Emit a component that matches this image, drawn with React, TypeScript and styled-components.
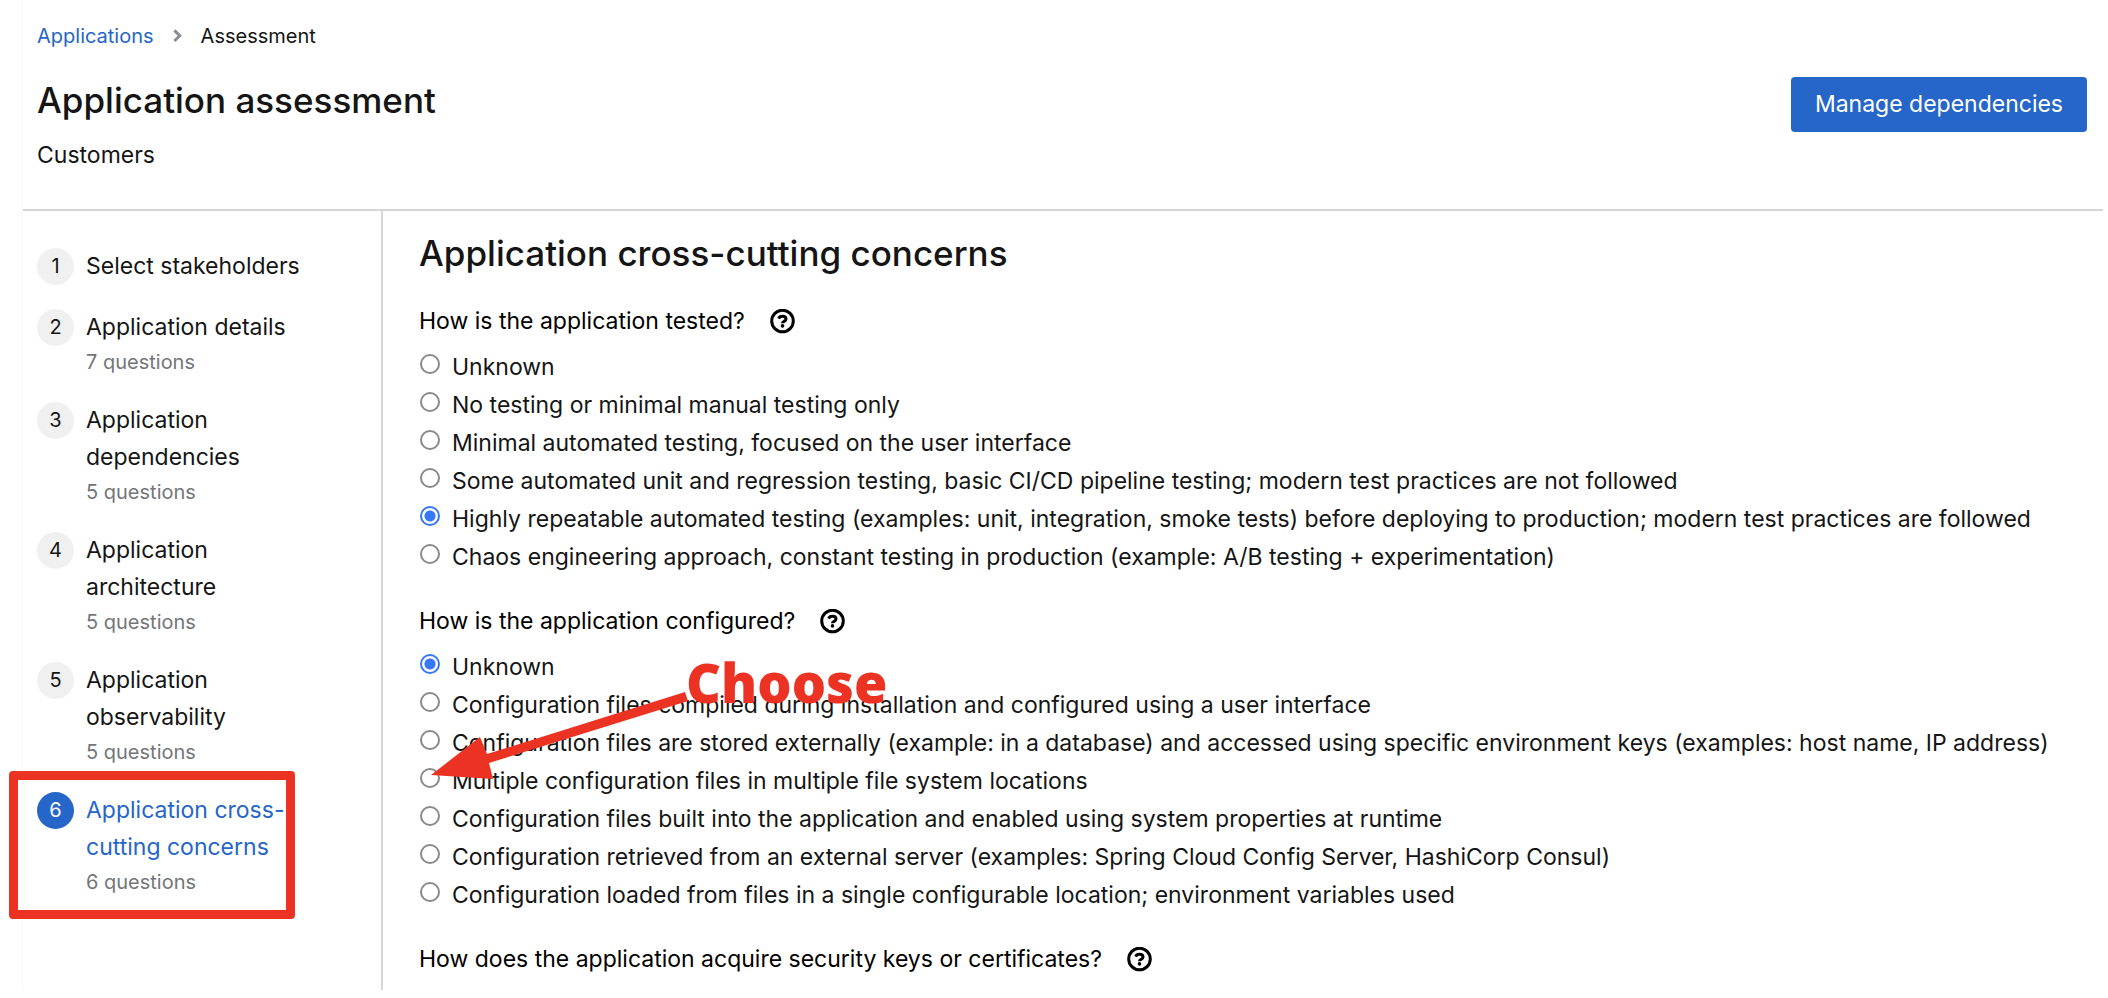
import React from "react";
import styled, { createGlobalStyle } from "styled-components";

const color = {
  text: "#151515",
  muted: "#737679",
  blue: "#2566c8",
  radio: "#3478f6",
  line: "#d6d6d6",
  badge: "#f0f0f0",
  mark: "#ec3323",
};

const GlobalStyle = createGlobalStyle`
  *, *::before, *::after { box-sizing: border-box; }
  body {
    margin: 0;
    background: #fff;
    color: ${color.text};
    font-family: Inter, "Liberation Sans", sans-serif;
    font-size: 23px;
    line-height: 37px;
  }
`;

const Page = styled.div`
  margin: 0 5px 0 22px;
  border-left: 1px solid #fafafa;
`;

const Header = styled.header`
  padding: 21px 16px 36px 14px;
  border-bottom: 2px solid ${color.line};
`;

const Breadcrumb = styled.ol`
  display: flex;
  align-items: center;
  gap: 19px;
  margin: 0 0 26px;
  padding: 0;
  list-style: none;
  font-size: 20px;
  line-height: 30px;
`;

const Crumb = styled.li`
  display: flex;
  align-items: center;
  gap: 19px;
`;

const CrumbLink = styled.a`
  color: ${color.blue};
  text-decoration: none;
`;

const TitleRow = styled.div`
  display: flex;
  justify-content: space-between;
  align-items: flex-start;
`;

const Heading = styled.h1`
  margin: 0;
  font-size: 35px;
  font-weight: 500;
  line-height: 46px;
`;

const Subtitle = styled.p`
  margin: 14px 0 0;
  line-height: 36px;
`;

const PrimaryButton = styled.button`
  height: 55px;
  padding: 0 24px;
  border: 0;
  border-radius: 4px;
  background: ${color.blue};
  color: #fff;
  font: inherit;
  cursor: pointer;
`;

const Body = styled.div`
  display: flex;
  align-items: stretch;
`;

const Sidebar = styled.nav`
  flex: 0 0 360px;
  padding: 37px 64px 12px 14px;
  border-right: 2px solid ${color.line};
`;

const StepList = styled.ol`
  display: flex;
  flex-direction: column;
  gap: 24px;
  margin: 0;
  padding: 0;
  list-style: none;
`;

const StepItem = styled.li`
  position: relative;
`;

const StepButton = styled.button`
  display: flex;
  align-items: flex-start;
  gap: 12px;
  width: 100%;
  padding: 0;
  border: 0;
  background: none;
  color: inherit;
  font: inherit;
  text-align: left;
  cursor: pointer;
`;

const StepNumber = styled.span<{ $current?: boolean }>`
  flex: 0 0 37px;
  height: 37px;
  border-radius: 50%;
  background: ${(p) => (p.$current ? color.blue : color.badge)};
  color: ${(p) => (p.$current ? "#fff" : color.text)};
  font-size: 20px;
  text-align: center;
`;

const StepText = styled.span`
  display: flex;
  flex-direction: column;
`;

const StepLabel = styled.span<{ $current?: boolean }>`
  color: ${(p) => (p.$current ? color.blue : color.text)};
`;

const StepCount = styled.span`
  color: ${color.muted};
  font-size: 20px;
  line-height: 32px;
`;

const Highlight = styled.span`
  position: absolute;
  inset: -21px auto -21px -28px;
  width: 286px;
  border: 9px solid ${color.mark};
  border-radius: 4px;
  pointer-events: none;
`;

const Main = styled.main`
  flex: 1;
  min-width: 0;
  display: flex;
  flex-direction: column;
  gap: 26px;
  padding: 19px 16px 12px 36px;
`;

const Question = styled.section`
  display: flex;
  flex-direction: column;
  gap: 8px;
`;

const QuestionHead = styled.div`
  display: flex;
  align-items: center;
  gap: 25px;
`;

const QuestionTitle = styled.h3`
  margin: 0;
  color: #000;
  font-size: 23px;
  font-weight: 400;
  line-height: 38px;
`;

const HelpButton = styled.button`
  display: flex;
  padding: 0;
  border: 0;
  background: none;
  color: #000;
  cursor: pointer;
`;

const OptionList = styled.ul`
  margin: 0;
  padding: 0 0 0 1px;
  list-style: none;
`;

const Option = styled.li`
  position: relative;
`;

const OptionLabel = styled.label`
  display: flex;
  align-items: flex-start;
  gap: 12px;
  line-height: 38px;
`;

const Radio = styled.input`
  appearance: none;
  flex: 0 0 20px;
  height: 20px;
  margin: 6px 0 0;
  border: 2px solid #8a8a8a;
  border-radius: 50%;
  background: #fff;

  &:checked {
    border-color: ${color.radio};
    background: radial-gradient(circle, ${color.radio} 0 5px, #fff 6px);
  }
`;

const Arrow = styled.svg`
  position: absolute;
  left: 11px;
  top: -70px;
  z-index: 1;
  fill: ${color.mark};
  pointer-events: none;
`;

const Callout = styled.strong`
  position: absolute;
  left: 266px;
  top: -110px;
  z-index: 1;
  color: ${color.mark};
  font-family: "Open Sans", sans-serif;
  font-size: 54px;
  font-weight: 800;
  line-height: 60px;
  pointer-events: none;
`;

const HelpIcon = () => (
  <svg width="25" height="25" viewBox="0 0 25 25" fill="none" stroke="currentColor" aria-hidden="true">
    <circle cx="12.5" cy="12" r="10.8" strokeWidth="3" />
    <path d="M8.7 9.6C9.3 8 10.6 7.3 12.4 7.3c2 0 3.6 1 3.6 2.6 0 1.3-.9 1.9-1.9 2.5-.9.5-1.6.8-1.6 1.8" strokeWidth="3" />
    <circle cx="12.5" cy="16.9" r="1.8" fill="currentColor" stroke="none" />
  </svg>
);

const Chevron = () => (
  <svg width="9" height="14" viewBox="0 0 9 14" fill="none" stroke="#8a8d90" strokeWidth="3" aria-hidden="true">
    <path d="M1.4 1.4 6.7 6.7 1.4 12" />
  </svg>
);

const steps = [
  { label: "Select stakeholders" },
  { label: "Application details", count: 7 },
  { label: "Application dependencies", count: 5 },
  { label: "Application architecture", count: 5 },
  { label: "Application observability", count: 5 },
  { label: "Application cross-cutting concerns", count: 6, current: true },
];

const questions = [
  {
    id: "tested",
    title: "How is the application tested?",
    selected: 4,
    options: [
      "Unknown",
      "No testing or minimal manual testing only",
      "Minimal automated testing, focused on the user interface",
      "Some automated unit and regression testing, basic CI/CD pipeline testing; modern test practices are not followed",
      "Highly repeatable automated testing (examples: unit, integration, smoke tests) before deploying to production; modern test practices are followed",
      "Chaos engineering approach, constant testing in production (example: A/B testing + experimentation)",
    ],
  },
  {
    id: "configured",
    title: "How is the application configured?",
    selected: 0,
    callout: 3,
    options: [
      "Unknown",
      "Configuration files compiled during installation and configured using a user interface",
      "Configuration files are stored externally (example: in a database) and accessed using specific environment keys (examples: host name, IP address)",
      "Multiple configuration files in multiple file system locations",
      "Configuration files built into the application and enabled using system properties at runtime",
      "Configuration retrieved from an external server (examples: Spring Cloud Config Server, HashiCorp Consul)",
      "Configuration loaded from files in a single configurable location; environment variables used",
    ],
  },
  {
    id: "keys",
    title: "How does the application acquire security keys or certificates?",
    options: [],
  },
];

export default function App() {
  return (
    <>
      <GlobalStyle />
      <Page>
        <Header>
          <nav aria-label="Breadcrumb">
            <Breadcrumb>
              <Crumb>
                <CrumbLink href="#applications">Applications</CrumbLink>
              </Crumb>
              <Crumb aria-current="page">
                <Chevron />
                Assessment
              </Crumb>
            </Breadcrumb>
          </nav>
          <TitleRow>
            <div>
              <Heading>Application assessment</Heading>
              <Subtitle>Customers</Subtitle>
            </div>
            <PrimaryButton type="button">Manage dependencies</PrimaryButton>
          </TitleRow>
        </Header>
        <Body>
          <Sidebar aria-label="Assessment steps">
            <StepList>
              {steps.map((step, i) => (
                <StepItem key={step.label}>
                  <StepButton type="button" aria-current={step.current ? "step" : undefined}>
                    <StepNumber $current={step.current}>{i + 1}</StepNumber>
                    <StepText>
                      <StepLabel $current={step.current}>{step.label}</StepLabel>
                      {step.count && <StepCount>{step.count} questions</StepCount>}
                    </StepText>
                  </StepButton>
                  {step.current && <Highlight />}
                </StepItem>
              ))}
            </StepList>
          </Sidebar>
          <Main>
            <Heading as="h2">Application cross-cutting concerns</Heading>
            {questions.map((q) => (
              <Question key={q.id} role="radiogroup" aria-labelledby={q.id}>
                <QuestionHead>
                  <QuestionTitle id={q.id}>{q.title}</QuestionTitle>
                  <HelpButton type="button" aria-label="More information">
                    <HelpIcon />
                  </HelpButton>
                </QuestionHead>
                {q.options.length > 0 && (
                  <OptionList>
                    {q.options.map((option, i) => (
                      <Option key={option}>
                        <OptionLabel>
                          <Radio type="radio" name={q.id} defaultChecked={q.selected === i} />
                          {option}
                        </OptionLabel>
                        {q.callout === i && (
                          <>
                            <Arrow width="257" height="87" viewBox="0 0 257 87" aria-hidden="true">
                              <path d="M0 83 49 45 56 62 254 0 257 9 58 71 62 87Z" />
                            </Arrow>
                            <Callout>Choose</Callout>
                          </>
                        )}
                      </Option>
                    ))}
                  </OptionList>
                )}
              </Question>
            ))}
          </Main>
        </Body>
      </Page>
    </>
  );
}
